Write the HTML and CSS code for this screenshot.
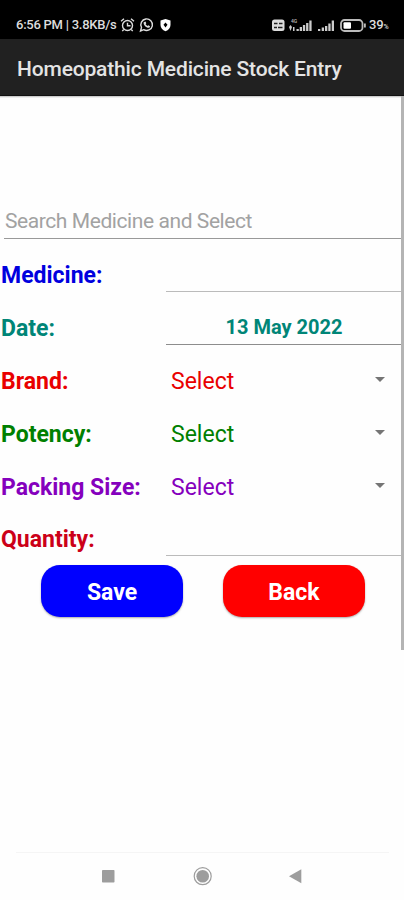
FILE: index.html
```html
<!DOCTYPE html>
<html lang="en">
<head>
<meta charset="utf-8">
<title>Homeopathic Medicine Stock Entry</title>
<link rel="stylesheet" href="styles.css">
</head>
<body>
<div class="status">
  <span class="clock">6:56 PM | 3.8KB/s</span>
  <svg class="status-left" width="54" height="16" viewBox="0 0 54 16" fill="none" stroke="#ddd" stroke-width="1.4">
    <circle cx="7.5" cy="8.5" r="5"/><path d="M7.5 5.8v3h3M1 4.2l3-2.4M14 4.2l-3-2.4M3.7 12.5l-1.4 1.6M11.3 12.5l1.4 1.6"/>
    <path d="M20.500 14l1-3.600a5.800 5.800 0 1 1 2.200 2.300z"/><path d="M23.700 5.200c-.7 2.600 2.800 6.200 5.600 5.600l.8-1.600-1.800-.9-1 .7-1.700-1.700.7-1-.8-1.700z" fill="#ddd" stroke="none"/>
    <path d="M45.500 2l5 1.600v4.400c0 3-2 5-5 6.300-3-1.300-5-3.300-5-6.300V3.600z" fill="#fff" stroke="none"/><path d="M45.500 5.600l2 2.200-2 2.600-2-2.600z" fill="#000" stroke="none"/>
  </svg>
  <svg class="status-right" width="98" height="16" viewBox="0 0 98 16">
    <rect x="1" y="2.500" width="12.500" height="11.500" rx="2.500" fill="#ddd"/>
    <path d="M3 6.500h3.500M8 6.500h3.500M3 10.500h3M7 10.500h4.500" stroke="#222" stroke-width="1.500"/>
    <text x="20" y="6" class="tiny">4G</text>
    <g fill="#ccc"><path d="M18 10l1.500-2 1.500 2-1.500 4zM22 10h1.500v4H22zM25.500 12h2.300v2h-2.300zM28.700 10h2.300v4h-2.300zM31.900 8h2.300v6h-2.300zM35.100 6h2.300v8h-2.300zM38.300 3.500h2.300V14h-2.300zM47 12h2.300v2H47zM50.700 10.500H53V14h-2.300zM54 9h2.300v5H54zM57.300 6.500h2.300V14h-2.300zM60.700 3.500H63V14h-2.300z"/></g>
    <rect x="70" y="3" width="21.500" height="11" rx="3.500" fill="none" stroke="#bbb" stroke-width="1.800"/>
    <rect x="72.500" y="5.200" width="7.500" height="6.600" rx="1" fill="#fff"/><path d="M93 6.500h1.800v4H93z" fill="#bbb"/>
  </svg>
  <span class="level">39<small>%</small></span>
</div>
<header class="bar"><h1>Homeopathic Medicine Stock Entry</h1></header>
<main class="form">
  <div class="search"><span>Search Medicine and Select</span></div>
  <div class="row medicine"><label>Medicine:</label><div class="field line light"></div></div>
  <div class="row date"><label>Date:</label><div class="field line"><b>13 May 2022</b></div></div>
  <div class="row brand"><label>Brand:</label><div class="field pick"><span>Select</span><i class="arrow"></i></div></div>
  <div class="row potency"><label>Potency:</label><div class="field pick"><span>Select</span><i class="arrow"></i></div></div>
  <div class="row packing"><label>Packing Size:</label><div class="field pick"><span>Select</span><i class="arrow"></i></div></div>
  <div class="row quantity"><label>Quantity:</label><div class="field line light"></div></div>
  <div class="actions"><button class="save">Save</button><button class="back">Back</button></div>
  <div class="scroll"></div>
</main>
<nav class="nav">
  <svg width="404" height="47" viewBox="0 0 404 47" fill="#9d9d9d">
    <rect x="102" y="17" width="12.500" height="12.500" rx=".8"/>
    <circle cx="202.700" cy="23.200" r="6.300"/><circle cx="202.700" cy="23.200" r="8.500" fill="none" stroke="#9d9d9d" stroke-width="1.200"/>
    <path d="M289 23.300l12.300-7v14z"/>
  </svg>
</nav>
</body>
</html>
```
FILE: styles.css
```css
* { box-sizing: border-box; }
body { margin: 0; width: 404px; height: 900px; display: flex; flex-direction: column; background: #fefefe; font-family: Roboto, sans-serif; overflow: hidden; }
.status { height: 39px; flex: none; background: #000; color: #ddd; display: flex; align-items: center; padding: 10px 0 0 16px; font-size: 13px; font-weight: 500; white-space: nowrap; }
.clock { width: 104px; letter-spacing: -.25px; }
.status svg { flex: none; }
.status-right { margin-left: 97px; }
.level { letter-spacing: -.2px; }
.level small { font-size: 7px; }
.tiny { font-size: 5px; fill: #bbb; }
.bar { height: 57px; flex: none; background: #212121; border-bottom: 1px solid #111; display: flex; align-items: center; padding: 4px 0 0 17px; }
h1 { margin: 0; color: #e4e4e4; font-size: 21px; font-weight: 500; letter-spacing: -.16px; white-space: nowrap; }
.form { position: relative; flex: 1; display: flex; flex-direction: column; background: linear-gradient(#bbb, #fefefe) 0 0 / 100% 2px no-repeat; }
.search { height: 143px; margin-left: 4px; border-bottom: 1px solid #999; display: flex; align-items: flex-end; padding: 0 0 5px 1px; color: #a2a2a2; font-size: 21px; letter-spacing: -.42px; margin-bottom: 9px; }
.row { height: 52.900px; flex: none; display: flex; align-items: center; font-size: 23px; }
.row label { width: 166px; flex: none; padding: 2px 0 0 1px; font-weight: 700; white-space: nowrap; }
.field { flex: 1; height: 100%; display: flex; align-items: center; }
.line { height: 44px; align-self: flex-start; border-bottom: 1px solid #8d8d8d; justify-content: center; }
.line.light { border-color: #bbb; }
.line b { font-size: 20px; padding: 10px 2px 0 0; }
.pick { justify-content: space-between; padding: 2px 19px 0 5px; }
.arrow { border: 5px solid transparent; border-top-color: #757575; border-bottom: 0; margin-top: -3px; }
.medicine { color: #0000de; }
.date { color: #008577; }
.brand { color: #e90000; }
.potency { color: #008000; }
.packing { color: #8500bd; }
.quantity { color: #cc0018; }
.actions { display: flex; gap: 40px; margin-left: 41px; }
button { width: 142px; height: 52px; border: 0; border-radius: 19px; color: #fff; font: 700 23px Roboto, sans-serif; box-shadow: 0 1px 2px #aaa; padding: 2px 0 0; }
.save { background: #0000ff; }
.back { background: #ff0000; }
.scroll { position: absolute; right: 0; top: 0; width: 3px; height: 554px; background: #b4b4b4; }
.nav { height: 48px; flex: none; background: linear-gradient(#f5f5f5, #f5f5f5) 16px 0 / 373px 1px no-repeat; }
.nav svg { display: block; margin-top: 1px; }
```
